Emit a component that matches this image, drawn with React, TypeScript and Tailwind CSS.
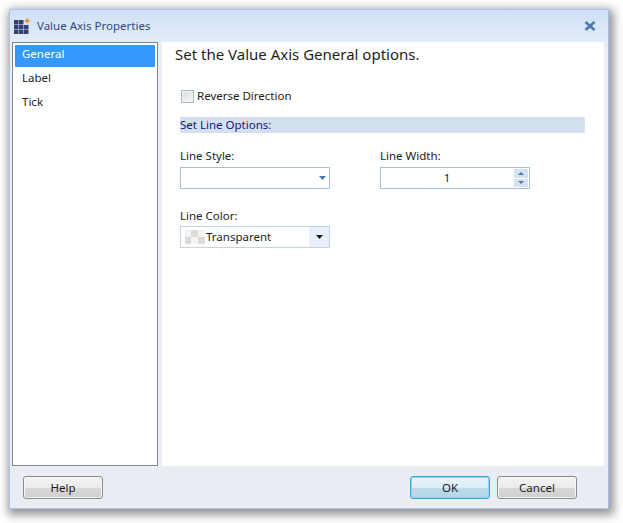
import React from "react";

const font = { fontFamily: '"Noto Sans", "Open Sans", sans-serif' };

const AppIcon = () => (
  <svg width="16" height="16" viewBox="0 0 16 16" className="shrink-0">
    <g fill="#34406e">
      <rect x="0" y="2" width="4.5" height="4.5" />
      <rect x="5" y="2" width="4.5" height="4.5" />
      <rect x="0" y="7" width="4.5" height="4.5" />
      <rect x="5" y="7" width="4.5" height="4.5" />
      <rect x="10" y="7" width="4.5" height="4.5" />
      <rect x="0" y="12" width="4.5" height="4" />
      <rect x="5" y="12" width="4.5" height="4" />
      <rect x="10" y="12" width="4.5" height="4" />
    </g>
    <path d="M12.5 0.5h1.6v1.6h1.6v1.6h-1.6v1.6h-1.6v-1.6h-1.6v-1.6h1.6z" fill="#f08a24" />
  </svg>
);

const Caret = ({ color = "#4a78b0", up = false, size = 7 }: { color?: string; up?: boolean; size?: number }) => (
  <svg width={size} height={size === 7 ? 4 : 3} viewBox="0 0 7 4" preserveAspectRatio="none">
    <path d={up ? "M3.5 0L7 4H0z" : "M0 0h7L3.5 4z"} fill={color} />
  </svg>
);

const Button = ({ label, primary }: { label: string; primary?: boolean }) => (
  <button
    className={
      primary
        ? "w-[80px] h-[23px] rounded-[3px] border border-[#3aa6cf] text-[11.5px] text-[#1a1a1a] bg-[linear-gradient(#e9f5fb_0%,#dcedf6_50%,#bcdcec_52%,#b4d6e8_100%)] shadow-[inset_0_0_0_1px_#8fd6f0]"
        : "w-[80px] h-[23px] rounded-[3px] border border-[#8a8a8a] text-[11.5px] text-[#1a1a1a] bg-[linear-gradient(#f4f4f4_0%,#ebebeb_50%,#d8d8d8_52%,#cfcfcf_100%)] shadow-[inset_0_0_0_1px_#f6f6f6]"
    }
  >
    {label}
  </button>
);

export default function App() {
  return (
    <div className="w-[623px] h-[523px] bg-white pl-[9px] pt-[9px] overflow-hidden" style={font}>
      <div className="w-[600px] h-[500px] flex flex-col border border-[#a9c6ee] border-r-[#9dbdea] rounded-t-[2px] bg-[#eaeef4] shadow-[2px_3px_10px_3px_rgba(0,0,0,0.42)]">
        {/* Title bar */}
        <div className="h-[32px] shrink-0 flex items-center pl-[4px] pr-[12px] bg-[linear-gradient(#cfdff5,#e3edf9)]">
          <AppIcon />
          <span className="ml-[7px] text-[11.5px] text-[#2f4a7c]">Value Axis Properties</span>
          <svg width="12" height="10" viewBox="0 0 12 10" className="ml-auto">
            <path d="M1.5 1l9 8M10.5 1l-9 8" stroke="#4f77ab" strokeWidth="2.6" />
          </svg>
        </div>

        <div className="flex-1 flex min-h-0 pl-[2px] pr-[4px] bg-[#eaeef4]">
          {/* Left nav */}
          <div className="w-[146px] shrink-0 border border-[#82878f] bg-white p-[2px] text-[11.5px] text-[#222]">
            <div className="h-[22px] pl-[7px] bg-[#3399ff] text-white rounded-[1px] leading-[17px]">General</div>
            <div className="h-[24px] flex items-center pl-[7px] pb-[2px]">Label</div>
            <div className="h-[24px] flex items-center pl-[7px] pb-[2px]">Tick</div>
          </div>

          {/* Options panel */}
          <div className="ml-[4px] flex-1 bg-white pl-[13px] pr-[19px] pt-[2px]">
            <h1 className="text-[15px] leading-[20px] text-[#1e1e1e]">Set the Value Axis General options.</h1>

            <label className="mt-[24px] ml-[6px] flex items-center gap-[3px] text-[11.5px] text-[#222] h-[16px]">
              <span className="w-[13px] h-[13px] border border-[#a4bcd8] bg-[linear-gradient(135deg,#dcdcdc,#fafafa)] shadow-[inset_0_0_0_1px_#f2f2f2]" />
              Reverse Direction
            </label>

            <div className="mt-[13px] ml-[5px] h-[16px] bg-[#d3e1ee] text-[11.5px] leading-[16px] text-[#14148c]">Set Line Options:</div>

            <div className="mt-[15px] ml-[5px] flex gap-[50px] text-[11.5px] text-[#222]">
              <div className="w-[150px]">
                <div className="h-[16px] leading-[16px] mb-[3px]">Line Style:</div>
                <div className="h-[22px] border border-[#a8bfdb] flex items-center justify-end pr-[3px]">
                  <Caret />
                </div>
              </div>
              <div className="w-[150px]">
                <div className="h-[16px] leading-[16px] mb-[3px]">Line Width:</div>
                <div className="h-[22px] border border-[#a8bfdb] flex">
                  <div className="flex-1 text-center leading-[20px]">1</div>
                  <div className="w-[16px] p-px flex flex-col gap-px bg-white">
                    <div className="flex-1 bg-[#d4e2f1] flex items-center justify-center"><Caret up size={6} /></div>
                    <div className="flex-1 bg-[#d4e2f1] flex items-center justify-center"><Caret size={6} /></div>
                  </div>
                </div>
              </div>
            </div>

            <div className="mt-[19px] ml-[5px] w-[150px] text-[11.5px] text-[#222]">
              <div className="h-[16px] leading-[16px] mb-[2px]">Line Color:</div>
              <div className="h-[22px] border border-[#c3d3e6] flex items-center pl-[4px]">
                <svg width="20" height="14" viewBox="0 0 20 14" className="shrink-0">
                  <rect width="20" height="14" fill="#f4f4f4" />
                  <rect x="6" width="7" height="7" fill="#dddbd6" />
                  <rect y="7" width="6" height="7" fill="#dddbd6" />
                  <rect x="13" y="7" width="7" height="7" fill="#dddbd6" />
                </svg>
                <span className="ml-[1px]">Transparent</span>
                <div className="ml-auto w-[20px] h-full bg-[#e9f0f9] flex items-center justify-center">
                  <Caret color="#1a1a1a" />
                </div>
              </div>
            </div>
          </div>
        </div>

        {/* Footer */}
        <div className="h-[42px] shrink-0 flex items-center pl-[13px] pr-[31px] pt-[1px] bg-[#eaeef4]">
          <Button label="Help" />
          <div className="ml-auto flex gap-[7px]">
            <Button label="OK" primary />
            <Button label="Cancel" />
          </div>
        </div>
      </div>
    </div>
  );
}
